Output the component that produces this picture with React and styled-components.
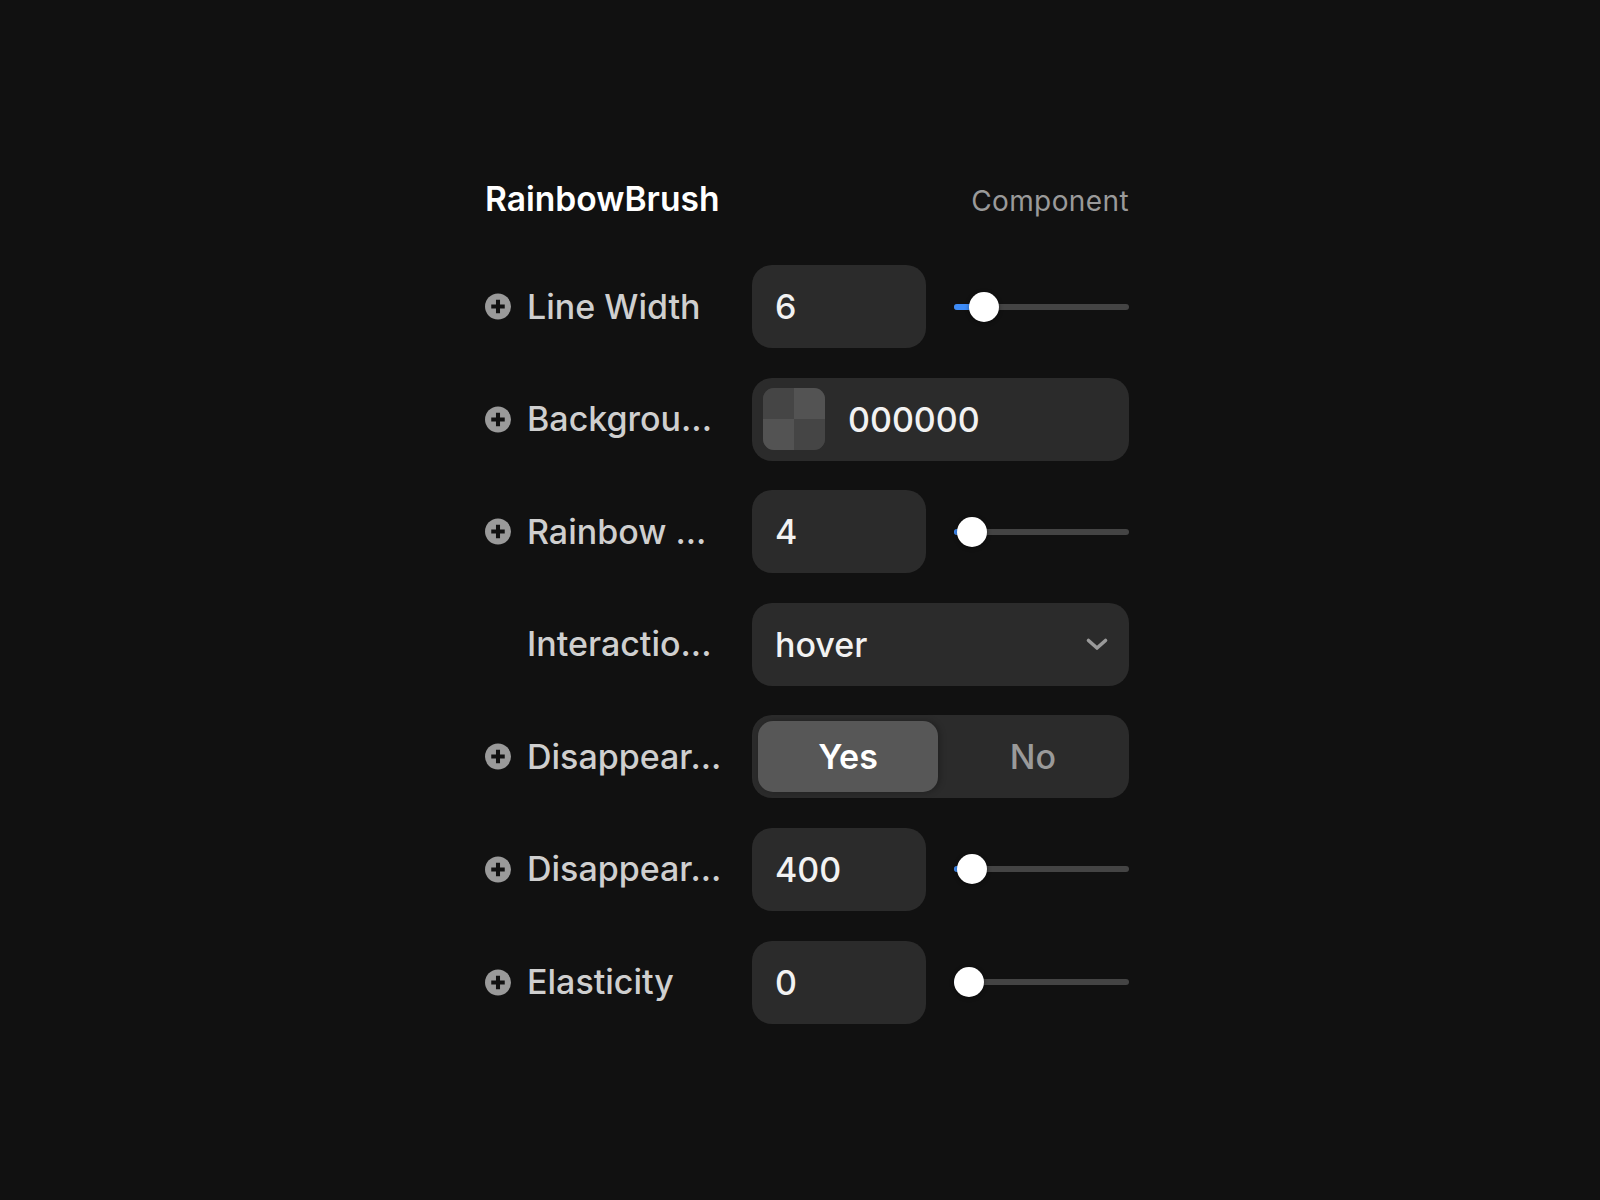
import React from "react";
import styled, { createGlobalStyle } from "styled-components";

const Global = createGlobalStyle`
  html, body { margin: 0; padding: 0; background: #111111; }
  body { font-family: Inter, "Noto Sans", "Liberation Sans", sans-serif; -webkit-font-smoothing: antialiased; }
`;

const Page = styled.div`
  min-height: 1200px;
  background: #111111;
  padding: 179px 0 0 485px;
  box-sizing: border-box;
`;

const Panel = styled.div`
  width: 644px;
  display: flex;
  flex-direction: column;
`;

const Header = styled.div`
  display: flex;
  justify-content: space-between;
  align-items: baseline;
  height: 40px;
  margin-bottom: 46px;
`;

const Title = styled.div`
  font-size: 33.6px;
  line-height: 40px;
  font-weight: 600;
  color: #ffffff;
`;

const Kind = styled.div`
  font-size: 28px;
  line-height: 40px;
  font-weight: 400;
  color: #9a9a9a;
  letter-spacing: 0.4px;
`;

const Rows = styled.div`
  display: flex;
  flex-direction: column;
  gap: 29.6px;
`;

const Row = styled.div`
  display: flex;
  align-items: center;
  height: 83px;
`;

const LabelCell = styled.div`
  width: 267px;
  flex: none;
  display: flex;
  align-items: center;
  gap: 16px;
`;

const IconSlot = styled.div`
  width: 26px;
  height: 26px;
  flex: none;
  display: flex;
  align-items: center;
  justify-content: center;
`;

const Label = styled.div`
  font-size: 34px;
  line-height: 40px;
  font-weight: 500;
  color: #cfcfcf;
  white-space: nowrap;
`;

const Field = styled.div`
  height: 83px;
  width: ${(p) => (p.$wide ? "377px" : "174px")};
  flex: none;
  box-sizing: border-box;
  background: #2b2b2b;
  border-radius: 20px;
  display: flex;
  align-items: center;
  padding: 0 23px;
  font-size: 34px;
  font-weight: 500;
  color: #f2f2f2;
`;

const ColorField = styled(Field)`
  padding: 0 11px;
  gap: 23px;
`;

const Swatch = styled.div`
  width: 62px;
  height: 62px;
  border-radius: 11px;
  overflow: hidden;
  display: grid;
  grid-template-columns: 1fr 1fr;
  grid-template-rows: 1fr 1fr;
  box-shadow: inset 0 0 0 2px rgba(255, 255, 255, 0.08);
`;

const Check = styled.div`
  background: ${(p) => (p.$light ? "#535353" : "#454545")};
`;

const SelectField = styled(Field)`
  justify-content: space-between;
  padding-right: 20px;
`;

const Segmented = styled.div`
  height: 83px;
  width: 377px;
  box-sizing: border-box;
  background: #2b2b2b;
  border-radius: 20px;
  padding: 6px;
  display: grid;
  grid-template-columns: 1fr 1fr;
  gap: 5px;
`;

const Segment = styled.div`
  border-radius: 15px;
  display: flex;
  align-items: center;
  justify-content: center;
  font-size: 34px;
  font-weight: ${(p) => (p.$active ? 600 : 500)};
  color: ${(p) => (p.$active ? "#ffffff" : "#9a9a9a")};
  background: ${(p) => (p.$active ? "#575757" : "transparent")};
  box-shadow: ${(p) => (p.$active ? "2px 0 6px rgba(0,0,0,0.25)" : "none")};
`;

const SliderWrap = styled.div`
  margin-left: 28px;
  width: 175px;
  height: 40px;
  position: relative;
  display: flex;
  align-items: center;
`;

const Track = styled.div`
  width: 100%;
  height: 6px;
  border-radius: 3px;
  background: #444444;
  position: relative;
`;

const Fill = styled.div`
  position: absolute;
  left: 0;
  top: 0;
  bottom: 0;
  border-radius: 3px;
  background: #3d8bf7;
`;

const Thumb = styled.div`
  position: absolute;
  top: 50%;
  width: 30px;
  height: 30px;
  margin-top: -15px;
  margin-left: -15px;
  border-radius: 50%;
  background: #ffffff;
  box-shadow: 0 1px 4px rgba(0, 0, 0, 0.45);
`;

const PlusIcon = () => (
  <svg width="27" height="27" viewBox="0 0 27 27">
    <circle cx="13.5" cy="13.5" r="13.5" fill="#9a9a9a" />
    <path d="M13.5 6.5v14M6.5 13.5h14" stroke="#111" strokeWidth="4.2" strokeLinecap="butt" />
  </svg>
);

const Chevron = () => (
  <svg width="24" height="15" viewBox="0 0 24 15">
    <path d="M3.5 3.5l8.5 7.5 8.5-7.5" fill="none" stroke="#9a9a9a" strokeWidth="3.6" strokeLinecap="round" strokeLinejoin="round" />
  </svg>
);

const Slider = ({ frac }) => {
  const thumb = 15 + frac * 145;
  return (
    <SliderWrap>
      <Track>
        <Fill style={{ width: `${thumb}px` }} />
      </Track>
      <Thumb style={{ left: `${thumb}px` }} />
    </SliderWrap>
  );
};

const LabelPart = ({ text, icon = true }) => (
  <LabelCell>
    <IconSlot>{icon && <PlusIcon />}</IconSlot>
    <Label>{text}</Label>
  </LabelCell>
);

export default function App() {
  return (
    <>
      <Global />
      <Page>
        <Panel>
          <Header>
            <Title>RainbowBrush</Title>
            <Kind>Component</Kind>
          </Header>
          <Rows>
            <Row>
              <LabelPart text="Line Width" />
              <Field>6</Field>
              <Slider frac={0.103} />
            </Row>
            <Row>
              <LabelPart text="Backgrou..." />
              <ColorField $wide>
                <Swatch>
                  <Check />
                  <Check $light />
                  <Check $light />
                  <Check />
                </Swatch>
                000000
              </ColorField>
            </Row>
            <Row>
              <LabelPart text="Rainbow ..." />
              <Field>4</Field>
              <Slider frac={0.02} />
            </Row>
            <Row>
              <LabelPart text="Interactio..." icon={false} />
              <SelectField $wide>
                hover
                <Chevron />
              </SelectField>
            </Row>
            <Row>
              <LabelPart text="Disappear..." />
              <Segmented>
                <Segment $active>Yes</Segment>
                <Segment>No</Segment>
              </Segmented>
            </Row>
            <Row>
              <LabelPart text="Disappear..." />
              <Field>400</Field>
              <Slider frac={0.02} />
            </Row>
            <Row>
              <LabelPart text="Elasticity" />
              <Field>0</Field>
              <Slider frac={0} />
            </Row>
          </Rows>
        </Panel>
      </Page>
    </>
  );
}
